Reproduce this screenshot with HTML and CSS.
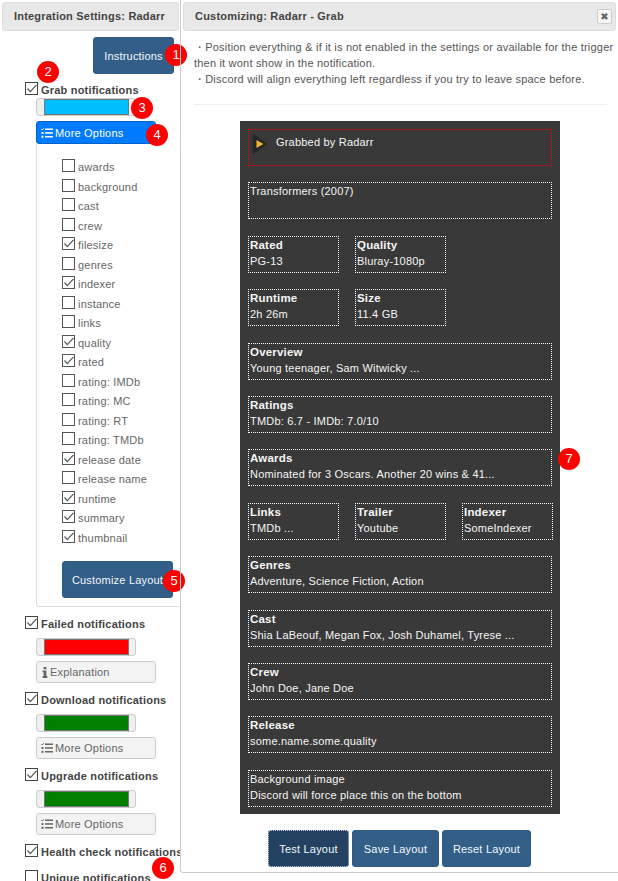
FILE: index.html
```html
<!DOCTYPE html>
<html lang="en">
<head>
<meta charset="utf-8">
<title>Integration Settings: Radarr</title>
<link rel="stylesheet" href="styles.css">
</head>
<body>
<svg class="defs" width="0" height="0" aria-hidden="true">
  <symbol id="tick" viewBox="0 0 13 13"><path d="M2.5 6.5 5.3 9.6 11.5 2.8" fill="none" stroke="#555" stroke-width="1.2"/></symbol>
  <symbol id="tasks" viewBox="0 0 12 10"><g fill="currentColor"><rect x="4" y="0.5" width="8" height="1.5"/><rect x="4" y="4.2" width="8" height="1.5"/><rect x="4" y="8" width="8" height="1.5"/><rect x="0.5" y="4" width="2" height="2"/><rect x="0.5" y="7.8" width="2" height="2"/></g><path d="M0.3 1 1.2 2 2.8 0.2" fill="none" stroke="currentColor" stroke-width="0.9"/></symbol>
</svg>
<div class="page">
  <aside class="side">
    <h2 class="head">Integration Settings: Radarr</h2>
    <div class="side-top"><button class="btn btn-instr">Instructions</button><span class="badge b1">1</span></div>
    <span class="badge b2">2</span>
    <label class="check first"><span class="box"><svg><use href="#tick"/></svg></span>Grab notifications</label>
    <div class="color"><i class="blue"></i></div><span class="badge b3">3</span>
    <button class="opt opt-on"><svg class="ic"><use href="#tasks"/></svg>More Options</button><span class="badge b4">4</span>
    <div class="options">
      <label class="o"><span class="box"></span>awards</label>
      <label class="o"><span class="box"></span>background</label>
      <label class="o"><span class="box"></span>cast</label>
      <label class="o"><span class="box"></span>crew</label>
      <label class="o"><span class="box"><svg><use href="#tick"/></svg></span>filesize</label>
      <label class="o"><span class="box"></span>genres</label>
      <label class="o"><span class="box"><svg><use href="#tick"/></svg></span>indexer</label>
      <label class="o"><span class="box"></span>instance</label>
      <label class="o"><span class="box"></span>links</label>
      <label class="o"><span class="box"><svg><use href="#tick"/></svg></span>quality</label>
      <label class="o"><span class="box"><svg><use href="#tick"/></svg></span>rated</label>
      <label class="o"><span class="box"></span>rating: IMDb</label>
      <label class="o"><span class="box"></span>rating: MC</label>
      <label class="o"><span class="box"></span>rating: RT</label>
      <label class="o"><span class="box"></span>rating: TMDb</label>
      <label class="o"><span class="box"><svg><use href="#tick"/></svg></span>release date</label>
      <label class="o"><span class="box"></span>release name</label>
      <label class="o"><span class="box"><svg><use href="#tick"/></svg></span>runtime</label>
      <label class="o"><span class="box"><svg><use href="#tick"/></svg></span>summary</label>
      <label class="o"><span class="box"><svg><use href="#tick"/></svg></span>thumbnail</label>
      <button class="btn btn-cust">Customize Layout</button><span class="badge b5">5</span>
    </div>
    <label class="check"><span class="box"><svg><use href="#tick"/></svg></span>Failed notifications</label>
    <div class="color"><i class="red"></i></div>
    <button class="opt"><svg class="ic-info" viewBox="0 0 6 11"><path d="M1.6 0h2.8v2.3H1.6zM.6 3.4h3.8v5.7h1V11H.6V9.1h1V5.3h-1z" fill="currentColor"/></svg>Explanation</button>
    <label class="check"><span class="box"><svg><use href="#tick"/></svg></span>Download notifications</label>
    <div class="color"><i class="green"></i></div>
    <button class="opt"><svg class="ic"><use href="#tasks"/></svg>More Options</button>
    <label class="check"><span class="box"><svg><use href="#tick"/></svg></span>Upgrade notifications</label>
    <div class="color"><i class="green"></i></div>
    <button class="opt"><svg class="ic"><use href="#tasks"/></svg>More Options</button>
    <label class="check health"><span class="box"><svg><use href="#tick"/></svg></span><span class="clip">Health check notifications</span></label>
    <label class="check unique"><span class="box"></span>Unique notifications</label>
    <span class="badge b6">6</span>
  </aside>
  <main class="main">
    <div class="head head-main"><h2>Customizing: Radarr - Grab</h2><span class="close">✖</span></div>
    <div class="notes">
      <p>・Position everything &amp; if it is not enabled in the settings or available for the trigger<br>then it wont show in the notification.<br>・Discord will align everything left regardless if you try to leave space before.</p>
    </div>
    <hr class="sep">
    <section class="card">
      <div class="f f-red author"><svg class="play" viewBox="0 0 16 20"><path d="M1.5 1 14.5 10 1.5 19Z" fill="#23262b" stroke="#23262b" stroke-width="1.5" stroke-linejoin="round"/><path d="M4.5 6 11.5 10 4.5 14Z" fill="#f5b120"/></svg><span>Grabbed by Radarr</span></div>
      <div class="f"><span>Transformers (2007)</span></div>
      <div class="row"><div class="f s"><b>Rated</b><span>PG-13</span></div><div class="f s"><b>Quality</b><span>Bluray-1080p</span></div></div>
      <div class="row"><div class="f s"><b>Runtime</b><span>2h 26m</span></div><div class="f s"><b>Size</b><span>11.4 GB</span></div></div>
      <div class="f"><b>Overview</b><span>Young teenager, Sam Witwicky ...</span></div>
      <div class="f"><b>Ratings</b><span>TMDb: 6.7 - IMDb: 7.0/10</span></div>
      <div class="f"><b>Awards</b><span>Nominated for 3 Oscars. Another 20 wins &amp; 41...</span></div>
      <div class="row"><div class="f s"><b>Links</b><span>TMDb ...</span></div><div class="f s"><b>Trailer</b><span>Youtube</span></div><div class="f s"><b>Indexer</b><span>SomeIndexer</span></div></div>
      <div class="f"><b>Genres</b><span>Adventure, Science Fiction, Action</span></div>
      <div class="f"><b>Cast</b><span>Shia LaBeouf, Megan Fox, Josh Duhamel, Tyrese ...</span></div>
      <div class="f"><b>Crew</b><span>John Doe, Jane Doe</span></div>
      <div class="f"><b>Release</b><span>some.name.some.quality</span></div>
      <div class="f"><span>Background image</span><span>Discord will force place this on the bottom</span></div>
    </section>
    <span class="badge b7">7</span>
    <div class="actions">
      <button class="btn btn-test">Test Layout</button>
      <button class="btn btn-save">Save Layout</button>
      <button class="btn btn-reset">Reset Layout</button>
    </div>
  </main>
</div>
</body>
</html>
```
FILE: styles.css
```css
* { box-sizing: border-box; }
html, body { margin: 0; padding: 0; background: #fff; }
body { font: 11px/16px "Liberation Sans", Arial, sans-serif; color: #555; letter-spacing: .2px; overflow: hidden; height: 881px; }
.defs { position: absolute; }
h2 { margin: 0; font: inherit; }
button { font: inherit; letter-spacing: inherit; cursor: pointer; }
.page { display: flex; align-items: flex-start; position: relative; }

.side { width: 180px; flex: none; position: relative; padding: 2px 0 0 0; height: 881px; }
.head { height: 29px; margin: 0 0 0 2px; width: 177px; background: #e8e8e8; border: 1px solid #ddd; border-radius: 3px; font-weight: 700; color: #444; padding: 0 0 0 11px; line-height: 27px; white-space: nowrap; }
.side-top { display: flex; justify-content: flex-end; padding: 6px 6px 0 0; height: 43px; }

.btn { background: #335e88; border: 1px solid #2e5a84; border-radius: 3px; color: #f4f7fa; padding: 0; height: 37px; }
.btn-instr { width: 81px; }
.btn-cust { width: 111px; margin: 12px 0 0 25px; display: block; }

.check { display: flex; align-items: flex-start; font-weight: 700; color: #444; margin: 9px 0 0 25px; height: 22px; white-space: nowrap; }
.check.first { margin-top: 8px; height: 16px; }
.box { width: 13px; height: 13px; border: 1px solid #444; background: #fff; margin-right: 3px; flex: none; display: block; position: relative; }
.box svg { position: absolute; left: -1px; top: -1px; width: 13px; height: 13px; display: block; }
.check .box { margin-top: 0; }
.check { line-height: 16px; padding-top: 0; }
.color { width: 100px; height: 18px; margin-left: 36px; background: #efefef; border: 1px solid #ccc; border-radius: 3px; padding: 0 6px 0 7px; }
.color i { display: block; height: 16px; border: 1px solid #767676; }
.blue { background: #00bfff; }
.red { background: #f00; }
.green { background: #008000; }

.opt { display: flex; align-items: center; width: 120px; height: 22px; margin: 5px 0 0 36px; background: #f3f3f3; border: 1px solid #ccc; border-radius: 3px; color: #666; padding: 0 0 0 4px; }
.opt-on { background: #007bff; border-color: #0062cc; color: #fff; height: 23px; position: relative; }
.ic { width: 12px; height: 10px; margin-right: 2px; color: currentColor; }
.ic-info { width: 6px; height: 11px; margin: 0 2px 0 1px; }

.options { width: 144px; margin-left: 36px; height: 463px; border: 1px solid #ddd; border-top: 0; border-right: 0; border-radius: 0 0 0 3px; padding: 15px 0 0 25px; }
.o { display: flex; height: 19.5px; white-space: nowrap; color: #666; line-height: 16px; }
.o .box { margin-right: 3px; margin-top: 0; border-color: #555; }
.o span + * { }
.btn-cust { margin-left: 0; }

.clip { display: block; width: 139px; overflow: hidden; }
.health { margin-top: 9px; height: 16px; }
.unique { margin-top: 10px; }

.main { width: 438px; flex: none; position: relative; height: 873px; border-left: 1px solid #ccc; border-bottom: 1px solid #ccc; border-radius: 0 0 0 3px; padding: 2px 0 0 2px; }
.head-main { display: flex; justify-content: space-between; align-items: center; width: 433px; margin: 0; padding: 0 3px 0 11px; }
.close { width: 15px; height: 15px; background: #f5f5f5; border: 1px solid #ccc; border-radius: 2px; color: #666; font: 10px/13px "DejaVu Sans", sans-serif; text-align: center; }
.notes { padding: 8px 12px 0 11px; color: #555; }
.notes p { margin: 0; white-space: nowrap; }
.sep { border: 0; border-top: 1px solid #eee; margin: 17px 11px 16px 11px; }

.card { width: 320px; margin-left: 57px; height: 693px; background: #393939; padding: 8px; color: #f5f5f5; display: flex; flex-direction: column; gap: 16.4px; }
.row { display: flex; gap: 16px; }
.f { height: 37px; border: 1px dotted #fff; padding: 0 0 0 1px; display: flex; flex-direction: column; line-height: 16px; white-space: nowrap; flex: none; }
.f b { font-size: 11.5px; letter-spacing: .2px; }
.f-red { border-color: #f00; }
.s { width: 91px; }
.author { flex-direction: row; align-items: flex-start; padding: 4px 0 0 3px; }
.play { width: 16px; height: 20px; margin-right: 8px; flex: none; }

.actions { display: flex; justify-content: flex-start; gap: 3px; margin: 16px 0 0 85px; }
.btn-test { width: 81px; background: #234261; border: 1px dotted #cfd8e2; }
.btn-save { width: 87px; }
.btn-reset { width: 89px; }

.badge { position: absolute; width: 22px; height: 22px; border-radius: 50%; background: #f00; color: #fff; font-size: 13px; line-height: 22px; text-align: center; letter-spacing: 0; }
.b1 { left: 165px; top: 44px; }
.b2 { left: 37px; top: 61px; }
.b3 { left: 131px; top: 97px; }
.b4 { left: 146px; top: 124px; }
.b5 { left: 163px; top: 570px; }
.b6 { left: 152px; top: 857px; }
.b7 { left: 377px; top: 448px; }
```
